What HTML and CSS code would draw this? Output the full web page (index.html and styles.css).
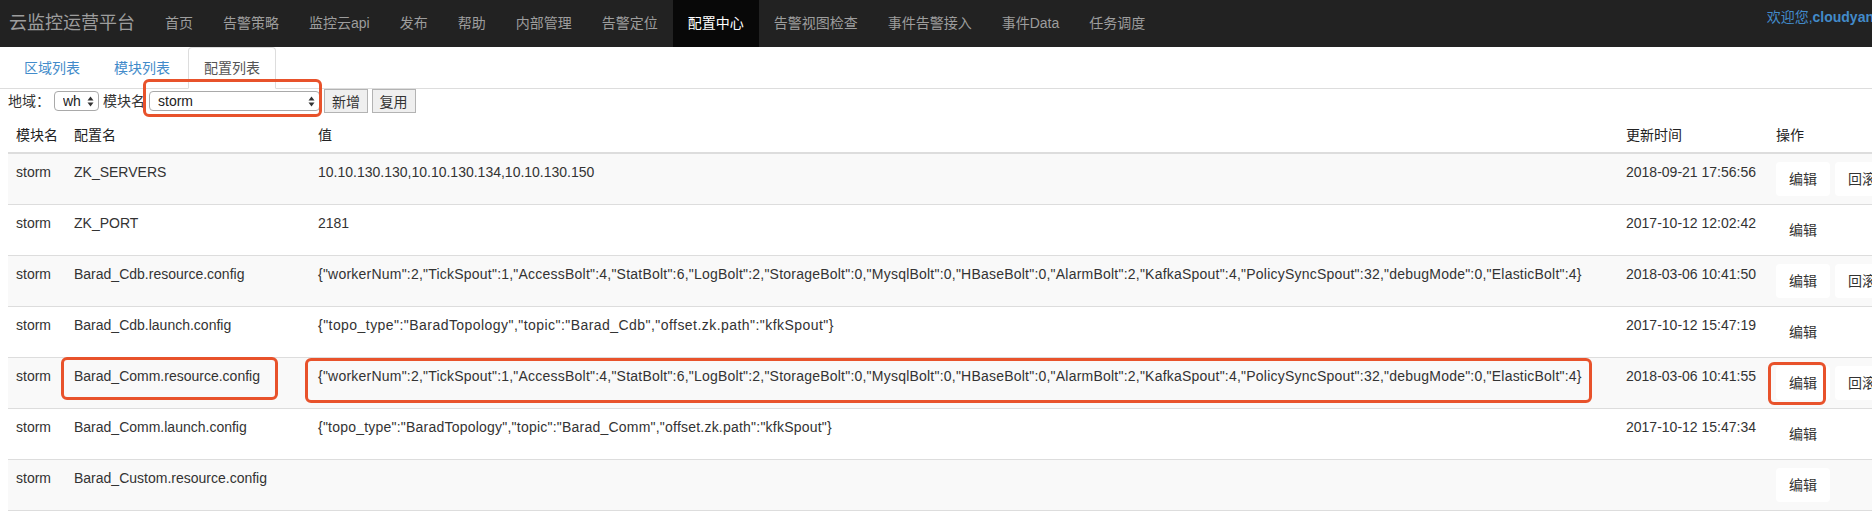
FILE: index.html
```html
<!DOCTYPE html>
<html lang="zh-CN">
<head>
<meta charset="utf-8">
<title>配置中心</title>
<link rel="stylesheet" href="styles.css">
</head>
<body>
<nav class="navbar">
  <a class="brand" href="#">云监控运营平台</a>
  <ul class="nav">
    <li><a href="#">首页</a></li>
    <li><a href="#">告警策略</a></li>
    <li><a href="#">监控云api</a></li>
    <li><a href="#">发布</a></li>
    <li><a href="#">帮助</a></li>
    <li><a href="#">内部管理</a></li>
    <li><a href="#">告警定位</a></li>
    <li class="active"><a href="#">配置中心</a></li>
    <li><a href="#">告警视图检查</a></li>
    <li><a href="#">事件告警接入</a></li>
    <li><a href="#">事件Data</a></li>
    <li><a href="#">任务调度</a></li>
  </ul>
  <p class="welcome">欢迎您,<b>cloudyan</b></p>
</nav>

<div class="page">
  <ul class="tabs">
    <li><a href="#">区域列表</a></li>
    <li><a href="#">模块列表</a></li>
    <li class="active"><a href="#">配置列表</a></li>
  </ul>

  <div class="toolbar">
    <span class="label">地域：</span>
    <span class="sel sel-region">
      <select><option>wh</option></select>
      <svg class="arrows" width="7" height="11" viewBox="0 0 7 11"><path d="M0.5 4.5 L3.5 0.5 L6.5 4.5 Z M0.5 6.5 L6.5 6.5 L3.5 10.5 Z" fill="#333"/></svg>
    </span>
    <span class="label">模块名</span>
    <span class="sel sel-module">
      <select><option>storm</option></select>
      <svg class="arrows" width="7" height="11" viewBox="0 0 7 11"><path d="M0.5 4.5 L3.5 0.5 L6.5 4.5 Z M0.5 6.5 L6.5 6.5 L3.5 10.5 Z" fill="#333"/></svg>
      <i class="mark mark-select"></i>
    </span>
    <button class="btn-plain" type="button">新增</button>
    <button class="btn-plain" type="button">复用</button>
  </div>

  <table class="grid">
    <colgroup>
      <col class="c-module"><col class="c-name"><col class="c-value"><col class="c-time"><col class="c-op">
    </colgroup>
    <thead>
      <tr><th>模块名</th><th>配置名</th><th>值</th><th>更新时间</th><th>操作</th></tr>
    </thead>
    <tbody>
      <tr>
        <td>storm</td><td>ZK_SERVERS</td><td>10.10.130.130,10.10.130.134,10.10.130.150</td><td>2018-09-21 17:56:56</td>
        <td class="ops"><button class="btn-op" type="button">编辑</button><button class="btn-op" type="button">回滚</button></td>
      </tr>
      <tr>
        <td>storm</td><td>ZK_PORT</td><td>2181</td><td>2017-10-12 12:02:42</td>
        <td class="ops"><button class="btn-op" type="button">编辑</button></td>
      </tr>
      <tr>
        <td>storm</td><td>Barad_Cdb.resource.config</td><td class="json">{"workerNum":2,"TickSpout":1,"AccessBolt":4,"StatBolt":6,"LogBolt":2,"StorageBolt":0,"MysqlBolt":0,"HBaseBolt":0,"AlarmBolt":2,"KafkaSpout":4,"PolicySyncSpout":32,"debugMode":0,"ElasticBolt":4}</td><td>2018-03-06 10:41:50</td>
        <td class="ops"><button class="btn-op" type="button">编辑</button><button class="btn-op" type="button">回滚</button></td>
      </tr>
      <tr>
        <td>storm</td><td>Barad_Cdb.launch.config</td><td class="json json-wide">{"topo_type":"BaradTopology","topic":"Barad_Cdb","offset.zk.path":"kfkSpout"}</td><td>2017-10-12 15:47:19</td>
        <td class="ops"><button class="btn-op" type="button">编辑</button></td>
      </tr>
      <tr>
        <td>storm</td><td class="marked">Barad_Comm.resource.config<i class="mark mark-name"></i></td><td class="json marked">{"workerNum":2,"TickSpout":1,"AccessBolt":4,"StatBolt":6,"LogBolt":2,"StorageBolt":0,"MysqlBolt":0,"HBaseBolt":0,"AlarmBolt":2,"KafkaSpout":4,"PolicySyncSpout":32,"debugMode":0,"ElasticBolt":4}<i class="mark mark-value"></i></td><td>2018-03-06 10:41:55</td>
        <td class="ops marked"><button class="btn-op" type="button">编辑</button><button class="btn-op" type="button">回滚</button><i class="mark mark-edit"></i></td>
      </tr>
      <tr>
        <td>storm</td><td>Barad_Comm.launch.config</td><td class="json">{"topo_type":"BaradTopology","topic":"Barad_Comm","offset.zk.path":"kfkSpout"}</td><td>2017-10-12 15:47:34</td>
        <td class="ops"><button class="btn-op" type="button">编辑</button></td>
      </tr>
      <tr>
        <td>storm</td><td>Barad_Custom.resource.config</td><td></td><td></td>
        <td class="ops"><button class="btn-op" type="button">编辑</button></td>
      </tr>
    </tbody>
  </table>
</div>
</body>
</html>
```

FILE: styles.css
```css
html, body {
  margin: 0;
  padding: 0;
  overflow-x: hidden;
}

body {
  font-family: "Liberation Sans", "Noto Sans CJK SC", sans-serif;
  font-size: 14px;
  line-height: 20px;
  color: #333;
  background: #fff;
}

a {
  text-decoration: none;
}

/* ---------- top navbar ---------- */
.navbar {
  display: flex;
  align-items: stretch;
  height: 47px;
  background: #222;
  overflow: hidden;
}

.brand {
  flex-shrink: 0;
  padding: 0 15px 0 9px;
  font-size: 18px;
  line-height: 47px;
  color: #9d9d9d;
}

.nav {
  display: flex;
  flex: 1;
  margin: 0;
  padding: 0;
  list-style: none;
}

.nav li a {
  display: block;
  padding: 0 15px;
  line-height: 47px;
  color: #9d9d9d;
  white-space: nowrap;
}

.nav li.active a {
  background: #080808;
  color: #fff;
}

.welcome {
  flex-shrink: 0;
  margin: 0 -2px 0 0;
  padding-top: 7px;
  line-height: 20px;
  color: #428bca;
  white-space: nowrap;
}

.welcome b {
  font-weight: bold;
}

/* ---------- page ---------- */
.page {
  padding: 0 0 0 8px;
}

.tabs {
  display: flex;
  margin: 0 0 0 -8px;
  padding: 0 0 0 8px;
  list-style: none;
  border-bottom: 1px solid #ddd;
}

.tabs li {
  margin-right: 2px;
  margin-bottom: -1px;
}

.tabs li a {
  display: block;
  padding: 10px 15px;
  border: 1px solid transparent;
  border-radius: 4px 4px 0 0;
  color: #428bca;
}

.tabs li.active a {
  color: #555;
  background: #fff;
  border-color: #ddd #ddd transparent;
}

/* ---------- toolbar ---------- */
.toolbar {
  display: flex;
  align-items: center;
  gap: 4px;
  height: 24px;
  margin-bottom: 4px;
}

.label {
  white-space: nowrap;
}

.sel {
  position: relative;
  display: block;
  height: 20px;
}

.sel select {
  -webkit-appearance: none;
  appearance: none;
  display: block;
  height: 20px;
  margin: 0;
  padding: 0 0 0 8px;
  border: 1px solid #a9a9a9;
  border-radius: 4px;
  background: #fff;
  font-family: inherit;
  font-size: 14px;
  line-height: 18px;
  color: #222;
}

.sel-region select {
  width: 45px;
}

.sel-module select {
  width: 171px;
}

.sel .arrows {
  position: absolute;
  right: 5px;
  top: 5px;
  pointer-events: none;
}

.btn-plain {
  height: 24px;
  margin: 0;
  padding: 0 7px;
  border: 1px solid #b3b3b3;
  border-radius: 0;
  background: #efefef;
  font-family: inherit;
  font-size: 14px;
  color: #333;
}

.btn-plain + .btn-plain {
  margin-left: -0.5px;
}

/* ---------- annotation marks ---------- */
.mark {
  position: absolute;
  border: 3px solid #e8522b;
  border-radius: 6px;
  pointer-events: none;
  z-index: 2;
}

.mark-select {
  left: -6px;
  top: -12px;
  width: 173px;
  height: 32px;
}

.mark-name {
  left: -5px;
  top: -1px;
  width: 211px;
  height: 37px;
}

.mark-value {
  left: -5px;
  top: 0;
  width: 1281px;
  height: 39px;
}

.mark-edit {
  left: 0;
  top: 4px;
  width: 52px;
  height: 37px;
}

/* ---------- table ---------- */
.grid {
  width: 1900px;
  table-layout: fixed;
  border-collapse: separate;
  border-spacing: 0;
}

.c-module { width: 58px; }
.c-name { width: 244px; }
.c-value { width: 1308px; }
.c-time { width: 150px; }
.c-op { width: 140px; }

.grid th {
  padding: 8px 8px 7px;
  text-align: left;
  font-weight: normal;
  color: #222;
  border-bottom: 2px solid #ddd;
  white-space: nowrap;
}

.grid td {
  padding: 8px;
  vertical-align: top;
  border-top: 1px solid #ddd;
  white-space: nowrap;
}

.grid td.json {
  letter-spacing: 0.22px;
}

.grid td.json-wide {
  letter-spacing: 0.45px;
}

.grid tbody tr:first-child td {
  border-top: 0;
}

.grid tbody tr:nth-child(odd) td {
  background: #f9f9f9;
}

.grid tbody tr:last-child td {
  border-bottom: 1px solid #ddd;
}

.grid td.marked {
  position: relative;
}

.btn-op {
  height: 34px;
  margin: 0 5px 0 0;
  padding: 6px 12px;
  border: 1px solid transparent;
  border-radius: 4px;
  background: #fff;
  font-family: inherit;
  font-size: 14px;
  line-height: 20px;
  color: #333;
}
```
